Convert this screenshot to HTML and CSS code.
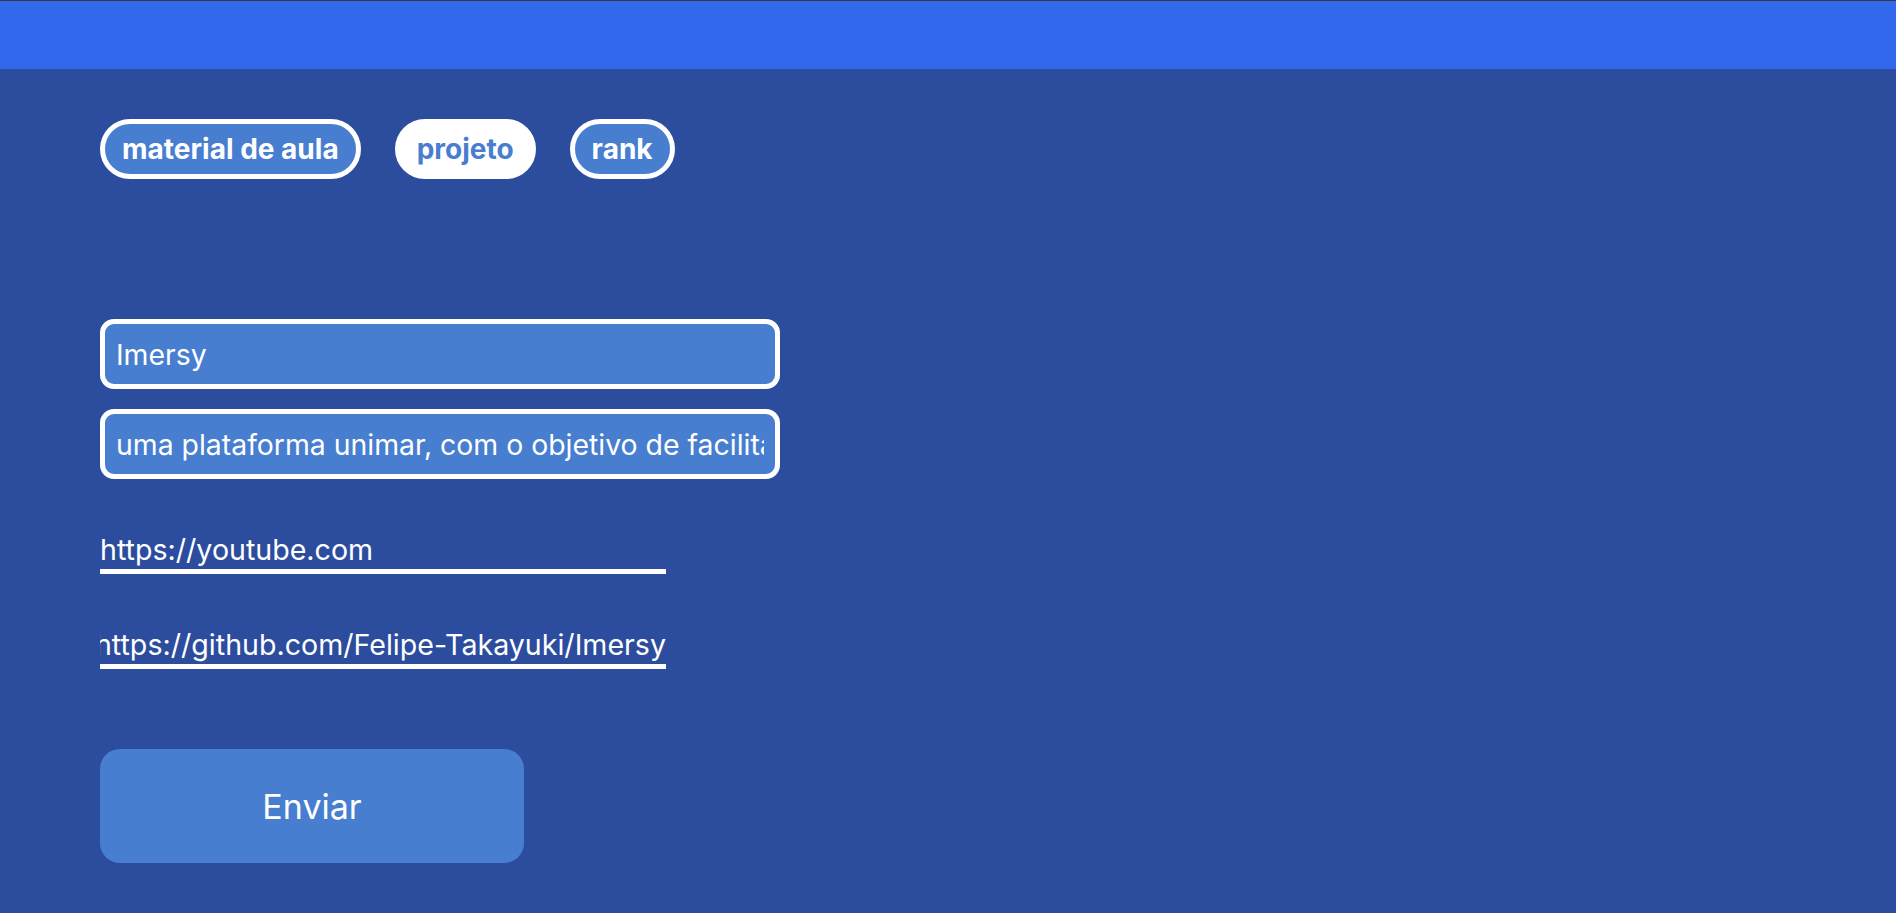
FILE: index.html
```html
<!DOCTYPE html>
<html lang="pt-BR">
<head>
<meta charset="utf-8">
<title>Imersy - projeto</title>
<link rel="stylesheet" href="styles.css">
</head>
<body>
<header class="topbar"></header>
<main class="content">
  <nav class="tabs">
    <a class="pill" href="#">material de aula</a>
    <a class="pill pill-active" href="#">projeto</a>
    <a class="pill" href="#">rank</a>
  </nav>
  <form class="form">
    <input class="box-input" type="text" value="Imersy">
    <input class="box-input" type="text" value="uma plataforma unimar, com o objetivo de facilitar o aprendizado">
    <div class="line-input"><span class="line-text">https://youtube.com</span></div>
    <div class="line-input line-end"><span class="line-text">https://github.com/Felipe-Takayuki/Imersy</span></div>
    <button class="send" type="button">Enviar</button>
  </form>
</main>
</body>
</html>
```

FILE: styles.css
```css
* { box-sizing: border-box; }
html, body { margin: 0; padding: 0; }
body {
  background: #2c4d9e;
  font-family: Inter, "Noto Sans", sans-serif;
  color: #ffffff;
  height: 913px;
  overflow: hidden;
}
.topbar {
  height: 69px;
  background: #3168ec;
  border-top: 1px solid #3a3a3a;
}
.content {
  padding-left: 100px;
}
.tabs {
  display: flex;
  gap: 34px;
  margin-top: 50px;
}
.pill {
  height: 60px;
  line-height: 50px;
  padding: 0 17px;
  border: 5px solid #ffffff;
  border-radius: 30px;
  background: #477ecf;
  color: #ffffff;
  font-weight: 700;
  font-size: 28px;
  text-decoration: none;
  white-space: nowrap;
}
.pill-active {
  background: #ffffff;
  color: #477ecf;
}
.form {
  display: flex;
  flex-direction: column;
  align-items: flex-start;
  margin-top: 140px;
}
.box-input {
  width: 680px;
  height: 70px;
  border: 5px solid #ffffff;
  border-radius: 14px;
  background: #477ecf;
  color: #ffffff;
  font-family: Inter, "Noto Sans", sans-serif;
  font-size: 28.4px;
  padding: 0 11px;
  margin: 0 0 20px 0;
  outline: none;
}
.line-input {
  width: 566px;
  height: 45px;
  border-bottom: 5px solid #ffffff;
  display: flex;
  align-items: center;
  overflow: hidden;
  font-size: 28.6px;
  white-space: nowrap;
  margin-top: 30px;
}
.line-input + .line-input { margin-top: 50px; }
.line-end { justify-content: flex-end; }
.line-text { flex: none; }
.send {
  margin-top: 80px;
  width: 424px;
  height: 114px;
  border: none;
  border-radius: 20px;
  background: #477ecf;
  color: #ffffff;
  font-family: Inter, "Noto Sans", sans-serif;
  font-size: 34px;
  cursor: pointer;
}
```
